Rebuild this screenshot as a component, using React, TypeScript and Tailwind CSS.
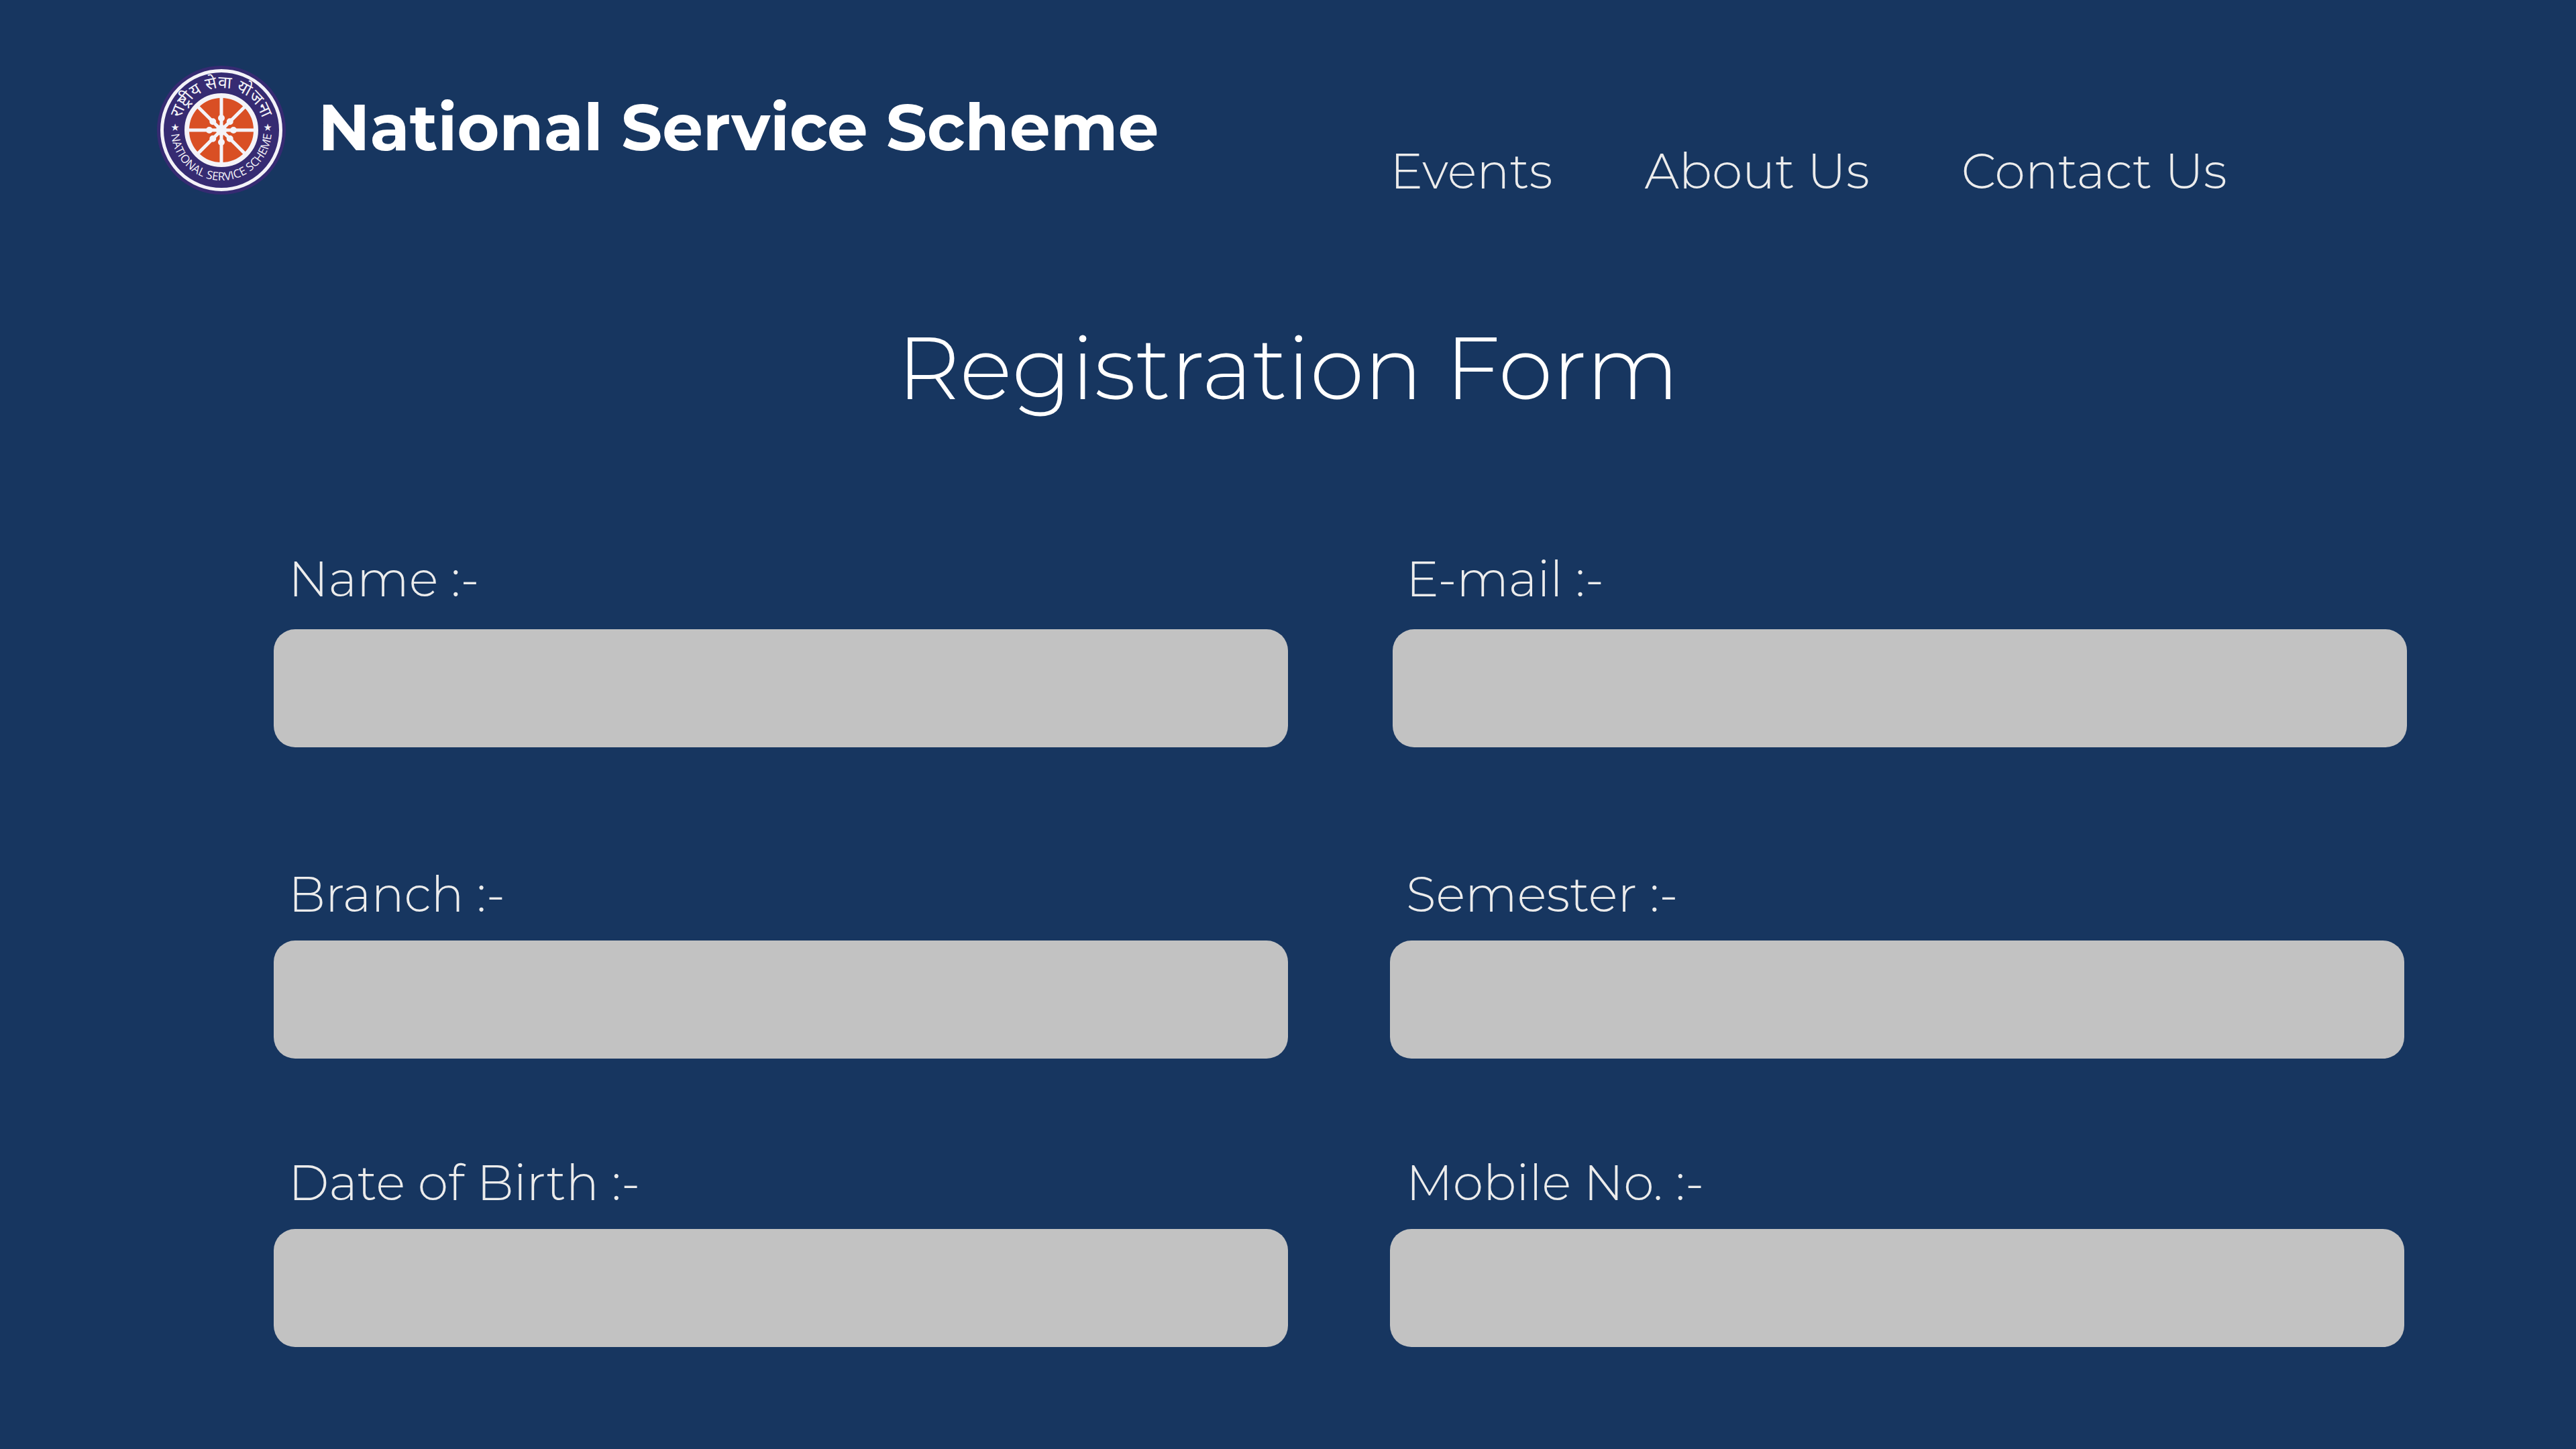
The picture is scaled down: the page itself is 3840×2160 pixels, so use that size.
import React from "react";

function Logo() {
	const spokes = [0, 45, 90, 135];
	const knobs = [0, 45, 90, 135, 180, 225, 270, 315];
	return (
		<svg width="192" height="192" viewBox="0 0 192 192" className="shrink-0">
			<defs>
				<path id="top-arc" d="M 33 96 A 63 63 0 0 1 159 96" />
				<path id="bottom-arc" d="M 21 96 A 75 75 0 0 0 171 96" />
			</defs>
			<circle cx="96" cy="96" r="96" fill="#362b72" />
			<circle cx="96" cy="96" r="88.5" fill="none" stroke="#f4f3f8" strokeWidth="5" />
			<circle cx="96" cy="96" r="51.5" fill="#d94f24" stroke="#f4f3f8" strokeWidth="7" />
			{spokes.map((a) => (
				<rect key={a} x="-50" y="-2.5" width="100" height="5" fill="#f4f3f8" transform={`translate(96 96) rotate(${a})`} />
			))}
			{knobs.map((a) => (
				<circle key={a} cx="18" cy="0" r="5" fill="#f4f3f8" transform={`translate(96 96) rotate(${a})`} />
			))}
			<circle cx="96" cy="96" r="8" fill="#f4f3f8" />
			<text fill="#f4f3f8" fontSize="25" fontFamily="'Noto Sans','Noto Sans CJK SC',sans-serif">
				<textPath href="#top-arc" startOffset="50%" textAnchor="middle">राष्ट्रीय सेवा योजना</textPath>
			</text>
			<text fill="#f4f3f8" fontSize="17" fontFamily="'Open Sans',sans-serif">
				<textPath href="#bottom-arc" startOffset="50%" textAnchor="middle">NATIONAL SERVICE SCHEME</textPath>
			</text>
			<text x="27" y="97" fill="#f4f3f8" fontSize="13" textAnchor="middle">★</text>
			<text x="165" y="97" fill="#f4f3f8" fontSize="13" textAnchor="middle">★</text>
		</svg>
	);
}

function Field({ label, labelClass }: { label: string; labelClass: string }) {
	return (
		<div className="flex flex-col">
			<label className={`text-[73px] leading-[90px] font-light text-[#ececec] whitespace-nowrap ${labelClass}`}>{label}</label>
			<div className="w-[1512px] h-[176px] rounded-[32px] bg-[#c2c2c2]" />
		</div>
	);
}

export default function App() {
	return (
		<div className="w-[3840px] h-[2160px] overflow-hidden bg-[#173660] font-['Montserrat','Inter',sans-serif]">
			<header className="flex items-start pl-[234px] pt-[98px]">
				<Logo />
				<h1 className="ml-[48px] mt-[34px] text-[96px] leading-[116px] font-bold text-white whitespace-nowrap">National Service Scheme</h1>
				<nav className="flex gap-[137px] ml-[345px] mt-[113px] text-[73px] leading-[88px] font-light text-[#ececec]">
					<a>Events</a>
					<a>About Us</a>
					<a>Contact Us</a>
				</nav>
			</header>
			<h2 className="text-center text-[130px] leading-[156px] font-light text-white mt-[172px]">Registration Form</h2>
			<main className="flex flex-col pl-[408px] mt-[191px]">
				<div className="flex gap-[156px]">
					<Field label="Name :-" labelClass="pl-[22px] mb-[30px]" />
					<Field label="E-mail :-" labelClass="pl-[20px] mb-[30px]" />
				</div>
				<div className="flex gap-[152px] mt-[174px]">
					<Field label="Branch :-" labelClass="pl-[22px] mb-[24px]" />
					<Field label="Semester :-" labelClass="pl-[24px] mb-[24px]" />
				</div>
				<div className="flex gap-[152px] mt-[140px]">
					<Field label="Date of Birth :-" labelClass="pl-[22px] mb-[24px]" />
					<Field label="Mobile No. :-" labelClass="pl-[24px] mb-[24px]" />
				</div>
			</main>
		</div>
	);
}
